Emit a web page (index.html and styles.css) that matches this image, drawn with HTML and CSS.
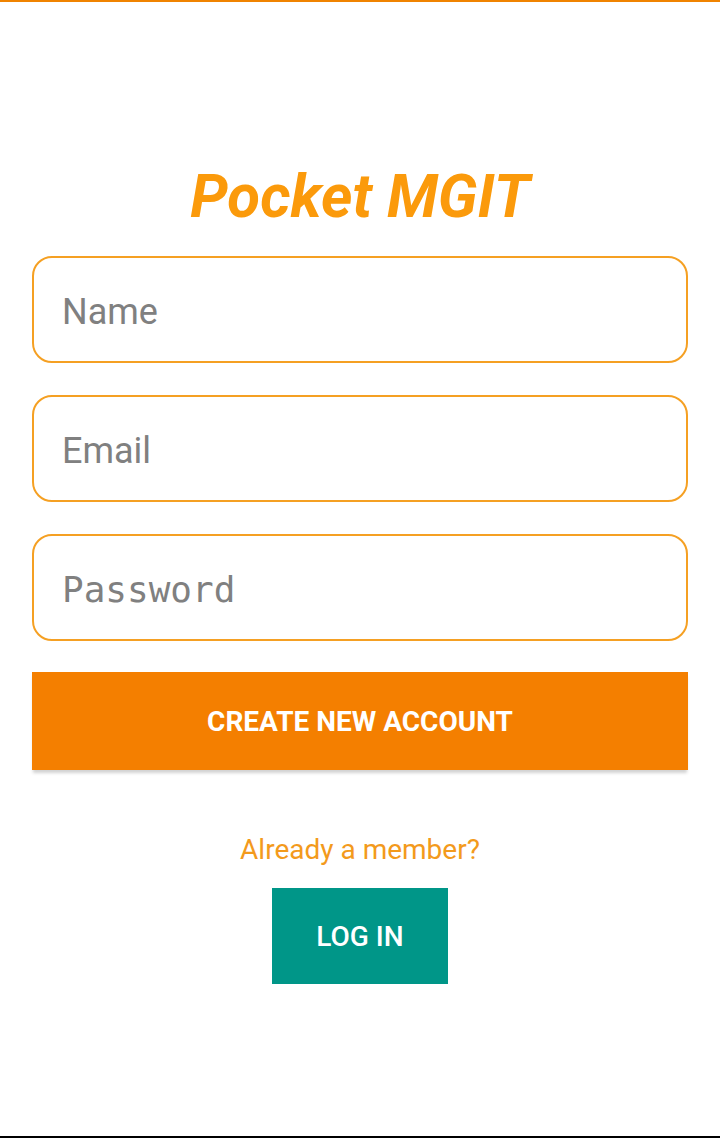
FILE: index.html
```html
<!DOCTYPE html>
<html lang="en">
<head>
<meta charset="utf-8">
<title>Pocket MGIT</title>
<link rel="stylesheet" href="styles.css">
</head>
<body>
<div class="screen">
  <div class="topbar"></div>
  <main class="content">
    <h1 class="title">Pocket MGIT</h1>
    <form class="form">
      <input class="field" type="text" placeholder="Name">
      <input class="field" type="email" placeholder="Email">
      <input class="field field-mono" type="password" placeholder="Password">
      <button class="btn-create" type="button">CREATE NEW ACCOUNT</button>
    </form>
    <p class="member">Already a member?</p>
    <button class="btn-login" type="button">LOG IN</button>
  </main>
  <div class="bottombar"></div>
</div>
</body>
</html>
```

FILE: styles.css
```css
* {
  box-sizing: border-box;
}

html, body {
  margin: 0;
  padding: 0;
  background: #ffffff;
}

.screen {
  width: 720px;
  height: 1138px;
  display: flex;
  flex-direction: column;
  font-family: Roboto, "Liberation Sans", sans-serif;
}

.topbar {
  height: 2px;
  background: #f08300;
  flex: none;
}

.content {
  flex: 1;
  display: flex;
  flex-direction: column;
  align-items: center;
  padding: 161px 32px 0;
}

.title {
  margin: 0;
  font-family: Roboto, "Liberation Sans", sans-serif;
  font-size: 60px;
  line-height: 68px;
  font-weight: 700;
  font-style: italic;
  color: #fb9a0b;
}

.form {
  width: 100%;
  display: flex;
  flex-direction: column;
  gap: 32px;
  margin-top: 25px;
}

.field {
  width: 100%;
  height: 107px;
  border: 2px solid #f5a023;
  border-radius: 20px;
  padding: 4px 28px 0 28px;
  font-family: Roboto, "Liberation Sans", sans-serif;
  font-size: 36px;
  color: #333333;
  background: #ffffff;
  outline: none;
}

.field::placeholder {
  color: #808080;
  opacity: 1;
}

.field-mono {
  font-family: "DejaVu Sans Mono", "Liberation Mono", monospace;
  font-size: 36px;
}

.btn-create {
  margin-top: -1px;
  width: 100%;
  height: 98px;
  border: none;
  border-radius: 0;
  background: #f47f00;
  color: #ffffff;
  font-family: Roboto, "Liberation Sans", sans-serif;
  font-weight: 700;
  font-size: 28px;
  letter-spacing: 0;
  box-shadow: 0 4px 3px -1px rgba(0, 0, 0, 0.18);
}

.member {
  margin: 64px 0 0;
  font-size: 28px;
  line-height: 32px;
  color: #f39a1c;
}

.btn-login {
  margin-top: 22px;
  width: 176px;
  height: 96px;
  border: none;
  border-radius: 0;
  background: #009688;
  color: #ffffff;
  font-family: Roboto, "Liberation Sans", sans-serif;
  font-weight: 500;
  font-size: 28px;
  padding-top: 2px;
}

.bottombar {
  height: 2px;
  background: #000000;
  flex: none;
}
```
